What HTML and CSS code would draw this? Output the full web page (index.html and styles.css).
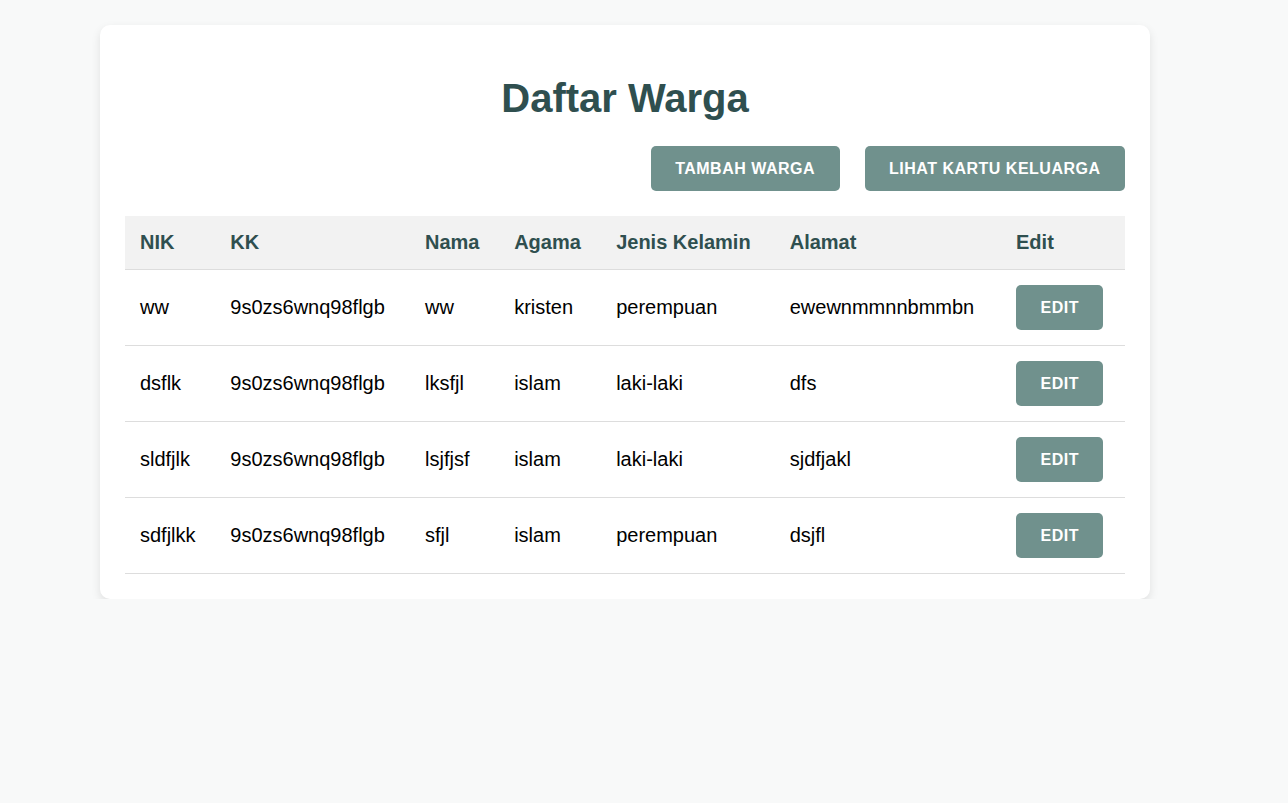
FILE: index.html
```html
<!DOCTYPE html>
<html lang="id">
<head>
<meta charset="utf-8">
<title>Daftar Warga</title>
<link rel="stylesheet" href="styles.css">
</head>
<body>
<div class="card">
  <h1 class="title">Daftar Warga</h1>
  <div class="actions">
    <button class="btn">Tambah Warga</button>
    <button class="btn">Lihat Kartu Keluarga</button>
  </div>
  <table class="table">
    <thead>
      <tr><th>NIK</th><th>KK</th><th>Nama</th><th>Agama</th><th>Jenis Kelamin</th><th>Alamat</th><th>Edit</th></tr>
    </thead>
    <tbody>
      <tr><td>ww</td><td>9s0zs6wnq98flgb</td><td>ww</td><td>kristen</td><td>perempuan</td><td>ewewnmmnnbmmbn</td><td><button class="btn">Edit</button></td></tr>
      <tr><td>dsflk</td><td>9s0zs6wnq98flgb</td><td>lksfjl</td><td>islam</td><td>laki-laki</td><td>dfs</td><td><button class="btn">Edit</button></td></tr>
      <tr><td>sldfjlk</td><td>9s0zs6wnq98flgb</td><td>lsjfjsf</td><td>islam</td><td>laki-laki</td><td>sjdfjakl</td><td><button class="btn">Edit</button></td></tr>
      <tr><td>sdfjlkk</td><td>9s0zs6wnq98flgb</td><td>sfjl</td><td>islam</td><td>perempuan</td><td>dsjfl</td><td><button class="btn">Edit</button></td></tr>
    </tbody>
  </table>
</div>
</body>
</html>
```
FILE: styles.css
```css
html, body {
  margin: 0;
  padding: 0;
  background: #f8f9f9;
  font-family: "Liberation Sans", Arial, sans-serif;
}
body {
  padding-top: 25px;
}
.card {
  box-sizing: border-box;
  width: 1050px;
  margin-left: 100px;
  background: #fff;
  border-radius: 10px;
  padding: 25px;
  box-shadow: 0 4px 10px rgba(0, 0, 0, 0.1);
}
.title {
  margin: 25px 0 0;
  font-size: 40px;
  line-height: 46px;
  text-align: center;
  color: #2f4f4f;
  font-weight: bold;
}
.actions {
  display: flex;
  justify-content: flex-end;
  gap: 25px;
  margin: 25px 0;
}
.btn {
  font-family: "Liberation Sans", Arial, sans-serif;
  font-size: 16px;
  line-height: 19px;
  font-weight: bold;
  letter-spacing: 0.5px;
  text-transform: uppercase;
  color: #fff;
  background: #70918d;
  border: none;
  border-radius: 5px;
  padding: 13px 24.5px 13px 24.5px;
  cursor: pointer;
}
.table {
  width: 100%;
  border-collapse: collapse;
  font-size: 20px;
  line-height: 23px;
}
.table th {
  background: #f2f2f2;
  color: #2f4f4f;
  font-weight: bold;
  text-align: left;
  padding: 15px;
  border-bottom: 1px solid #ddd;
}
.table td {
  color: #000;
  padding: 15px;
  border-bottom: 1px solid #ddd;
  text-align: left;
}
```
